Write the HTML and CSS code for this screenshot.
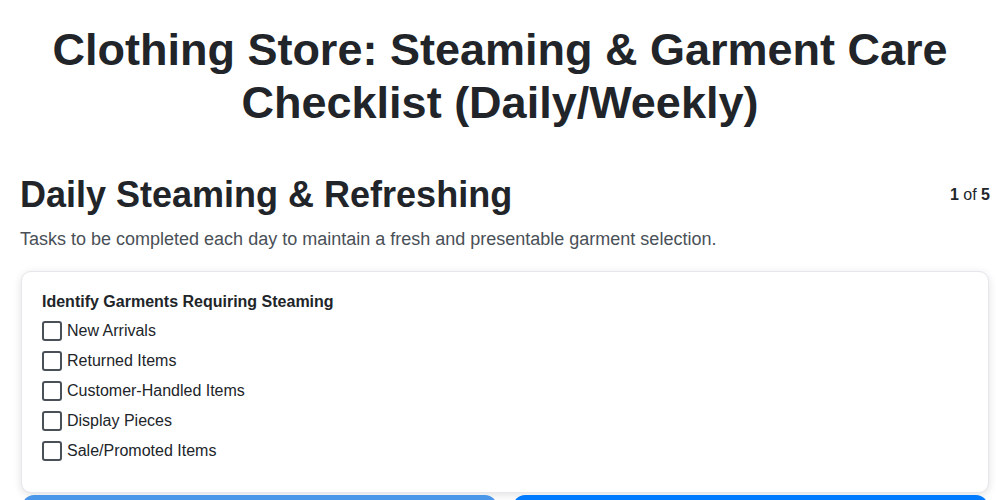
FILE: index.html
```html
<!DOCTYPE html>
<html lang="en">
<head>
<meta charset="utf-8">
<title>Clothing Store: Steaming &amp; Garment Care Checklist</title>
<link rel="stylesheet" href="styles.css">
</head>
<body>
<h1 class="title">Clothing Store: Steaming &amp; Garment Care Checklist (Daily/Weekly)</h1>
<div class="page">
  <div class="section-head">
    <h2 class="section-title">Daily Steaming &amp; Refreshing</h2>
    <div class="counter"><b>1</b> of <b>5</b></div>
  </div>
  <p class="section-desc">Tasks to be completed each day to maintain a fresh and presentable garment selection.</p>
  <div class="card">
    <h3 class="group-title">Identify Garments Requiring Steaming</h3>
    <label class="item"><input type="checkbox" class="box"><span>New Arrivals</span></label>
    <label class="item"><input type="checkbox" class="box"><span>Returned Items</span></label>
    <label class="item"><input type="checkbox" class="box"><span>Customer-Handled Items</span></label>
    <label class="item"><input type="checkbox" class="box"><span>Display Pieces</span></label>
    <label class="item"><input type="checkbox" class="box"><span>Sale/Promoted Items</span></label>
  </div>
  <div class="nav">
    <button class="btn btn-prev" disabled>Previous</button>
    <button class="btn btn-next">Next</button>
  </div>
</div>
</body>
</html>
```
FILE: styles.css
```css
html, body {
  margin: 0;
  padding: 0;
  background: #ffffff;
  font-family: "Liberation Sans", Arial, sans-serif;
  color: #212529;
}
.title {
  margin: 23px 0 0;
  padding: 0 20px;
  font-size: 45px;
  line-height: 53px;
  font-weight: 700;
  text-align: center;
  color: #212529;
}
.page {
  padding: 0 10px 0 20px;
}
.section-head {
  display: flex;
  justify-content: space-between;
  align-items: center;
  margin-top: 44px;
}
.section-title {
  margin: 0;
  font-size: 36px;
  line-height: 44px;
  font-weight: 700;
}
.counter {
  font-size: 16px;
  color: #212529;
}
.section-desc {
  margin: 9px 0 0;
  font-size: 18px;
  line-height: 26px;
  color: #495057;
}
.card {
  margin: 19px 1px 0;
  background: #fff;
  border: 1px solid #e6e6ec;
  border-radius: 10px;
  box-shadow: 0 2px 8px rgba(0, 0, 0, 0.12);
  padding: 20px 20px 26px;
}
.group-title {
  margin: 0 0 4px;
  font-size: 16px;
  line-height: 20px;
  font-weight: 700;
}
.item {
  display: flex;
  align-items: center;
  height: 30px;
  font-size: 16px;
  color: #212529;
}
.box {
  appearance: none;
  -webkit-appearance: none;
  margin: 0 5px 0 0;
  width: 20px;
  height: 20px;
  border: 2px solid #495057;
  border-radius: 3px;
  background: #fff;
}
.nav {
  display: flex;
  gap: 16px;
  margin-top: 2px;
  padding: 0 2px;
}
.btn {
  flex: 1;
  height: 44px;
  border: none;
  border-radius: 12px;
  font-family: inherit;
  font-size: 16px;
  color: #fff;
  background: #007bff;
}
.btn-prev {
  background: #4a96e8;
}
```
